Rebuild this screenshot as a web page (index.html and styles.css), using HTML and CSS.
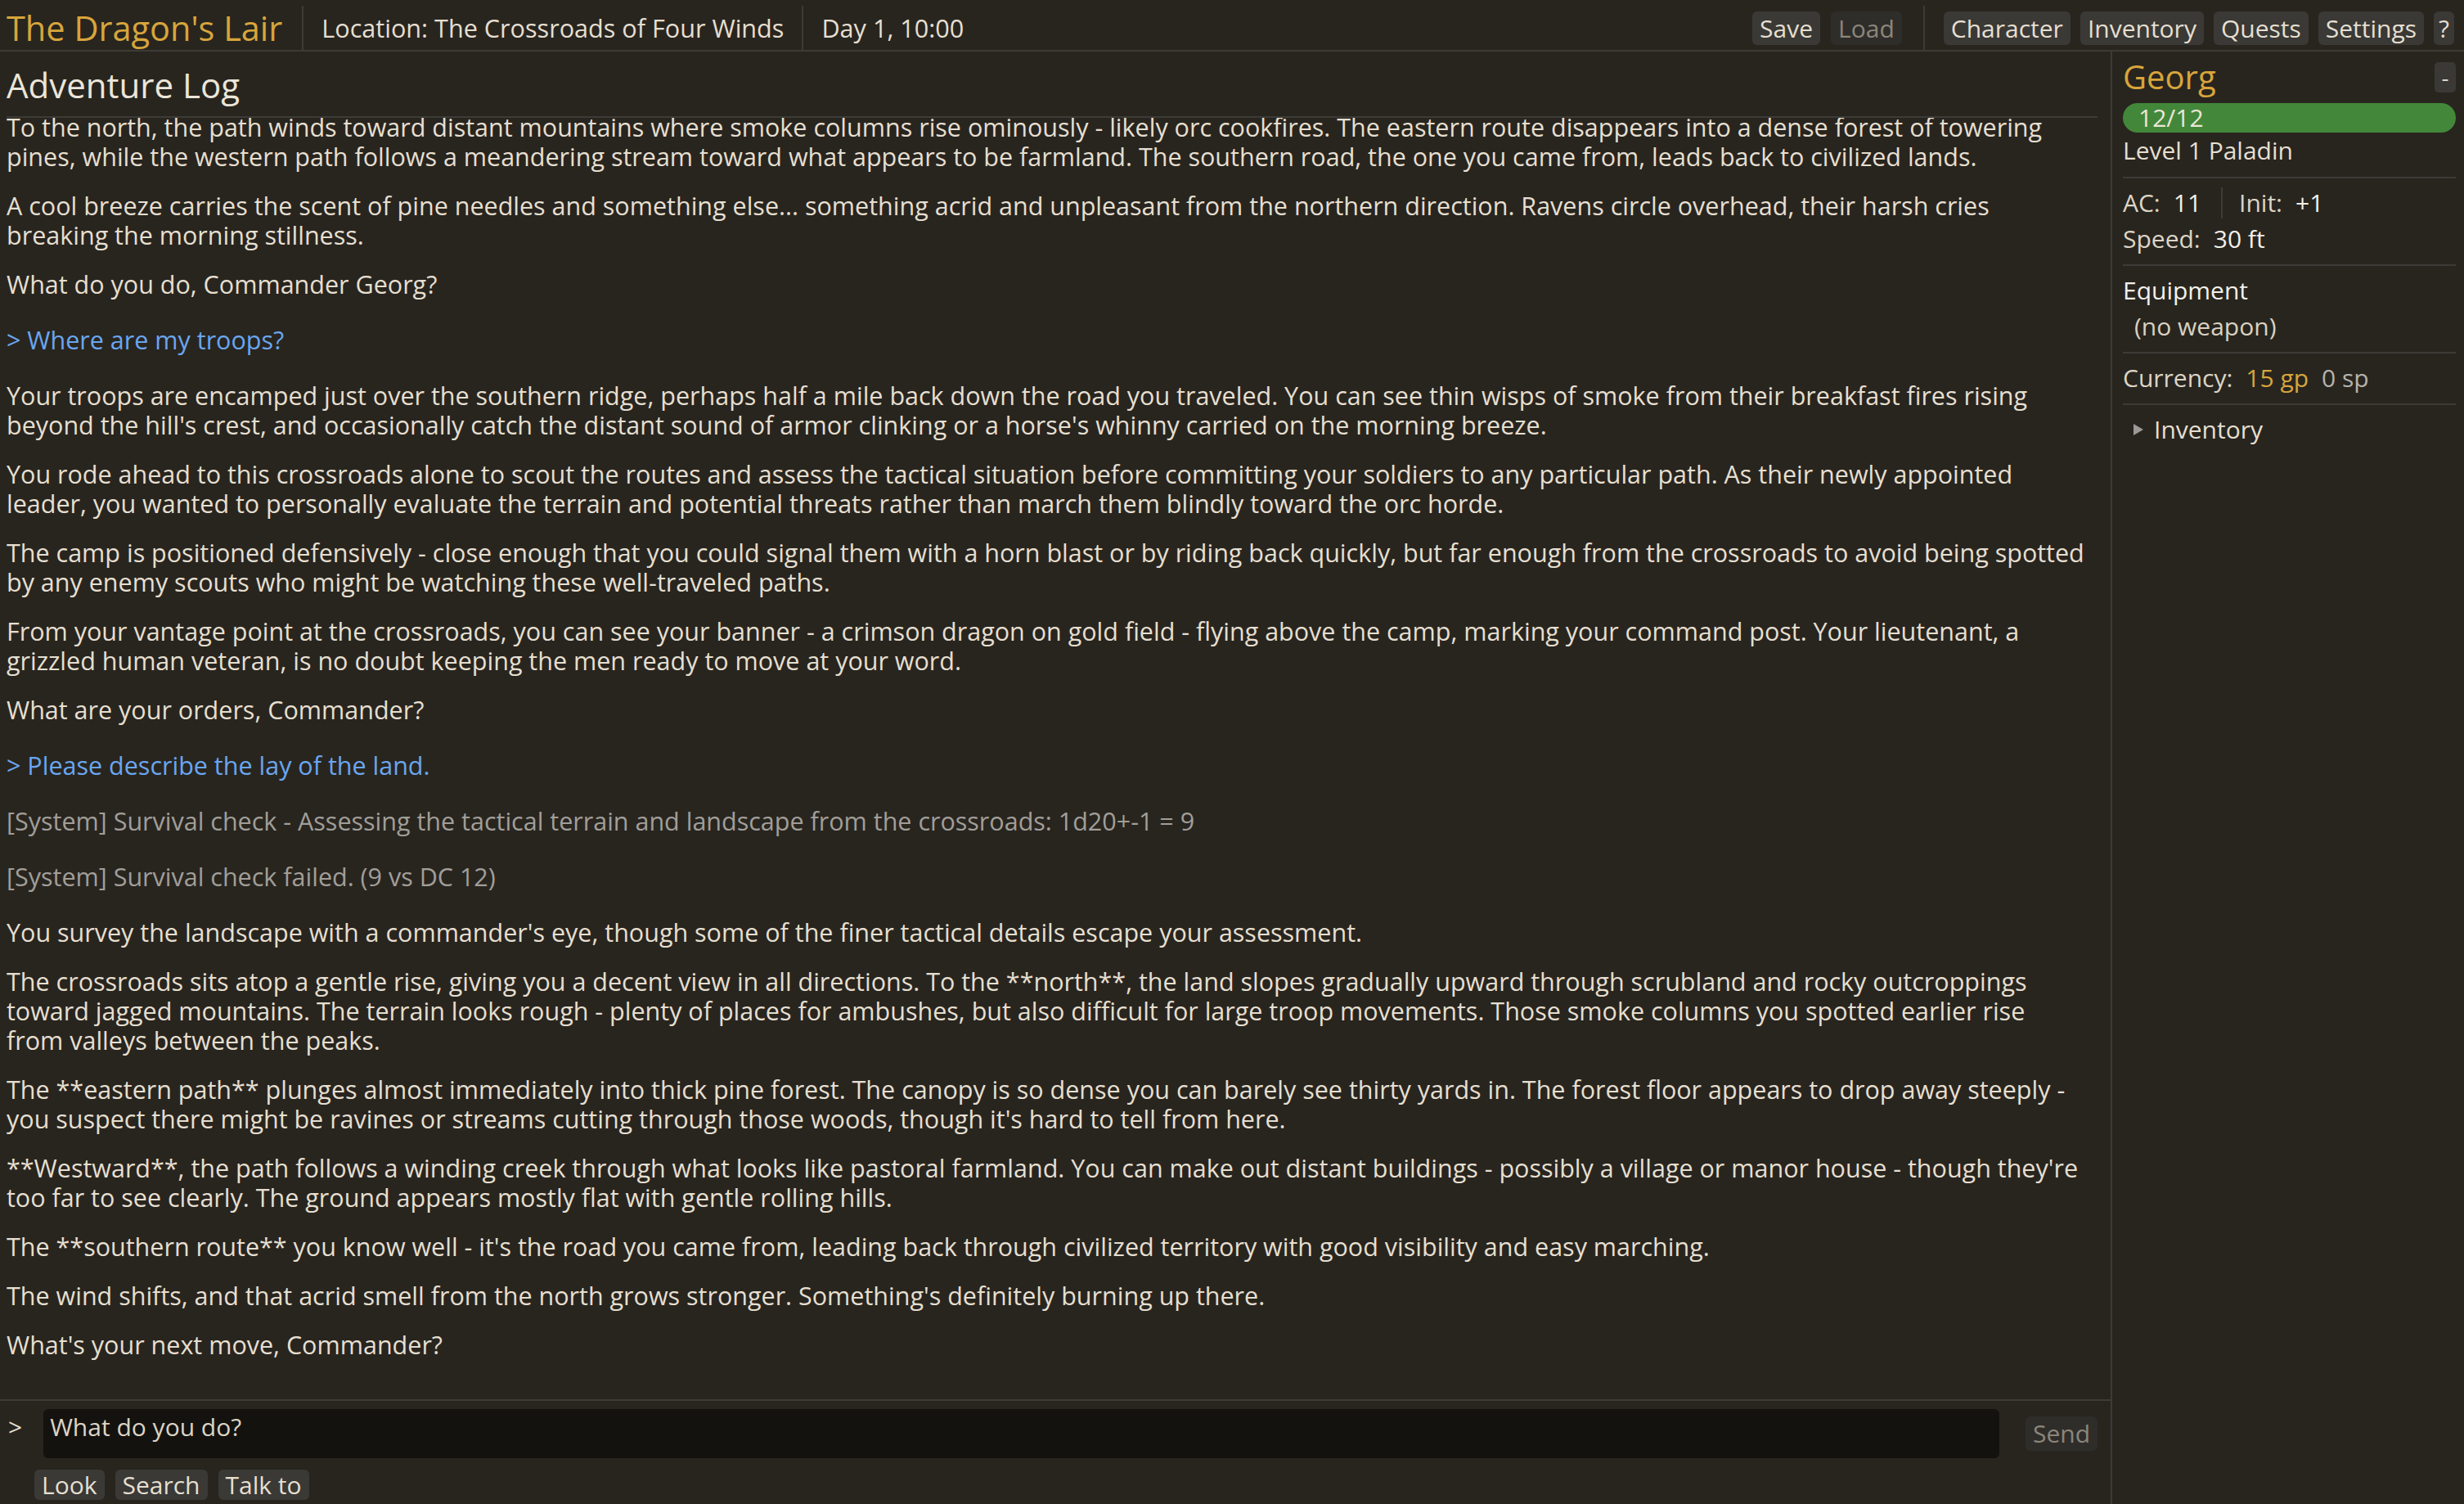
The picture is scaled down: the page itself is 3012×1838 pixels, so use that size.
FILE: index.html
```html
<!DOCTYPE html>
<html>
<head>
    <title>The Dragon's Lair</title>
    <link rel="stylesheet" href="styles.css">
</head>
<body>
    <header class="topbar">
        <div class="game-title">The Dragon's Lair</div>
        <div class="location">Location: The Crossroads of Four Winds</div>
        <div class="game-time">Day 1, 10:00</div>
        <div class="spacer"></div>
        <div class="file-actions">
            <button class="btn">Save</button>
            <button class="btn btn-disabled">Load</button>
        </div>
        <nav class="nav-actions">
            <button class="btn">Character</button>
            <button class="btn">Inventory</button>
            <button class="btn">Quests</button>
            <button class="btn">Settings</button>
            <button class="btn btn-help">?</button>
        </nav>
    </header>

    <div class="content">
        <main class="main-panel">
            <h2 class="log-title">Adventure Log</h2>
            <div class="log">
                <div class="log-inner">
                    <p class="entry">To the north, the path winds toward distant mountains where smoke columns rise ominously - likely orc cookfires. The eastern route disappears into a dense forest of towering pines, while the western path follows a meandering stream toward what appears to be farmland. The southern road, the one you came from, leads back to civilized lands.</p>
                    <p class="entry">A cool breeze carries the scent of pine needles and something else... something acrid and unpleasant from the northern direction. Ravens circle overhead, their harsh cries breaking the morning stillness.</p>
                    <p class="entry">What do you do, Commander Georg?</p>
                    <p class="entry player">&gt; Where are my troops?</p>
                    <p class="entry">Your troops are encamped just over the southern ridge, perhaps half a mile back down the road you traveled. You can see thin wisps of smoke from their breakfast fires rising beyond the hill's crest, and occasionally catch the distant sound of armor clinking or a horse's whinny carried on the morning breeze.</p>
                    <p class="entry">You rode ahead to this crossroads alone to scout the routes and assess the tactical situation before committing your soldiers to any particular path. As their newly appointed leader, you wanted to personally evaluate the terrain and potential threats rather than march them blindly toward the orc horde.</p>
                    <p class="entry">The camp is positioned defensively - close enough that you could signal them with a horn blast or by riding back quickly, but far enough from the crossroads to avoid being spotted by any enemy scouts who might be watching these well-traveled paths.</p>
                    <p class="entry">From your vantage point at the crossroads, you can see your banner - a crimson dragon on gold field - flying above the camp, marking your command post. Your lieutenant, a grizzled human veteran, is no doubt keeping the men ready to move at your word.</p>
                    <p class="entry">What are your orders, Commander?</p>
                    <p class="entry player">&gt; Please describe the lay of the land.</p>
                    <p class="entry system">[System] Survival check - Assessing the tactical terrain and landscape from the crossroads: 1d20+-1 = 9</p>
                    <p class="entry system">[System] Survival check failed. (9 vs DC 12)</p>
                    <p class="entry">You survey the landscape with a commander's eye, though some of the finer tactical details escape your assessment.</p>
                    <p class="entry">The crossroads sits atop a gentle rise, giving you a decent view in all directions. To the **north**, the land slopes gradually upward through scrubland and rocky outcroppings toward jagged mountains. The terrain looks rough - plenty of places for ambushes, but also difficult for large troop movements. Those smoke columns you spotted earlier rise from valleys between the peaks.</p>
                    <p class="entry">The **eastern path** plunges almost immediately into thick pine forest. The canopy is so dense you can barely see thirty yards in. The forest floor appears to drop away steeply - you suspect there might be ravines or streams cutting through those woods, though it's hard to tell from here.</p>
                    <p class="entry">**Westward**, the path follows a winding creek through what looks like pastoral farmland. You can make out distant buildings - possibly a village or manor house - though they're too far to see clearly. The ground appears mostly flat with gentle rolling hills.</p>
                    <p class="entry">The **southern route** you know well - it's the road you came from, leading back through civilized territory with good visibility and easy marching.</p>
                    <p class="entry">The wind shifts, and that acrid smell from the north grows stronger. Something's definitely burning up there.</p>
                    <p class="entry">What's your next move, Commander?</p>
                </div>
            </div>

            <div class="input-area">
                <div class="input-row">
                    <span class="prompt">&gt;</span>
                    <textarea class="command-input" placeholder="What do you do?"></textarea>
                    <button class="btn btn-send">Send</button>
                </div>
                <div class="quick-actions">
                    <button class="btn btn-quick">Look</button>
                    <button class="btn btn-quick">Search</button>
                    <button class="btn btn-quick">Talk to</button>
                </div>
            </div>
        </main>

        <aside class="sidebar">
            <section class="side-section">
                <div class="char-head">
                    <span class="char-name">Georg</span>
                    <button class="collapse-btn">-</button>
                </div>
                <div class="hp-bar">12/12</div>
                <div class="char-class">Level 1 Paladin</div>
            </section>
            <section class="side-section">
                <div class="stat-row">
                    <span class="stat-label">AC:</span>
                    <span class="stat-value">11</span>
                    <span class="stat-divider"></span>
                    <span class="stat-label">Init:</span>
                    <span class="stat-value">+1</span>
                </div>
                <div class="stat-row">
                    <span class="stat-label">Speed:</span>
                    <span class="stat-value">30 ft</span>
                </div>
            </section>
            <section class="side-section">
                <div class="section-title">Equipment</div>
                <div class="equip-item">(no weapon)</div>
            </section>
            <section class="side-section">
                <div class="stat-row">
                    <span class="stat-label">Currency:</span>
                    <span class="coin-gold">15 gp</span>
                    <span class="coin-silver">0 sp</span>
                </div>
            </section>
            <details class="inventory">
                <summary>Inventory</summary>
            </details>
        </aside>
    </div>
</body>
</html>
```

FILE: styles.css
```css
* {
    box-sizing: border-box;
}
html, body {
    height: 100%;
}
body {
    margin: 0;
    font-family: "Open Sans", "Noto Sans", sans-serif;
    font-size: 30px;
    color: #e6dfd0;
    background-color: #28251f;
    display: flex;
    flex-direction: column;
    overflow: hidden;
}

/* top bar */
.topbar {
    height: 63px;
    flex-shrink: 0;
    padding-top: 7px;
    border-bottom: 2px solid #3d3b37;
    display: flex;
    align-items: stretch;
}
.game-title {
    display: flex;
    align-items: center;
    padding: 0 24px 0 8px;
    font-size: 41.5px;
    color: #d8a53b;
    border-right: 2px solid #3d3b37;
}
.location,
.game-time {
    display: flex;
    align-items: center;
    padding: 0 22px;
    font-size: 30.6px;
}
.location {
    border-right: 2px solid #3d3b37;
}
.spacer {
    flex: 1;
}
.file-actions,
.nav-actions {
    display: flex;
    align-items: center;
    gap: 13px;
}
.file-actions {
    padding-right: 26px;
    border-right: 2px solid #3d3b37;
}
.nav-actions {
    gap: 12px;
    padding: 0 12px 0 23px;
}
.btn {
    font-family: inherit;
    font-size: 30px;
    height: 41px;
    line-height: 41px;
    padding: 0 9px;
    background-color: #3a3936;
    color: #e6dfd0;
    border: none;
    border-radius: 6px;
    cursor: pointer;
}
.btn:hover {
    background-color: #4a4845;
}
.btn-disabled {
    background-color: #2f2d2a;
    color: #8b867b;
}
.btn-help {
    padding: 0 6px;
}

/* layout */
.content {
    flex: 1;
    min-height: 0;
    display: flex;
}
.main-panel {
    flex: 1;
    min-width: 0;
    display: flex;
    flex-direction: column;
}

/* adventure log */
.log-title {
    margin: 0 16px 0 8px;
    padding: 16px 0 13px;
    font-size: 42px;
    font-weight: 400;
    line-height: 50px;
    color: #ece6d9;
    border-bottom: 2px solid #3d3b37;
}
.log {
    flex: 1;
    min-height: 0;
    overflow: hidden;
    display: flex;
    flex-direction: column;
    justify-content: flex-end;
    padding: 0 29px 0 8px;
    font-size: 30.5px;
    line-height: 36px;
}
.log-inner {
    flex-shrink: 0;
    padding-bottom: 25px;
}
.entry {
    margin: 0 0 24px;
}
.entry.player {
    margin: 32px 0;
    color: #6aa6ef;
}
.entry.system {
    margin: 32px 0;
    color: #a19e99;
}

/* command input */
.input-area {
    flex-shrink: 0;
    border-top: 2px solid #3d3b37;
    padding: 10px 16px 5px 8px;
}
.input-row {
    display: flex;
    align-items: center;
}
.prompt {
    align-self: flex-start;
    padding: 4px 0 0 2px;
    margin-right: 26px;
    line-height: 36px;
}
.command-input {
    flex: 1;
    height: 60px;
    padding: 4px 8px;
    font-family: inherit;
    font-size: 30px;
    line-height: 36px;
    color: #e6dfd0;
    background-color: #14120e;
    border: none;
    border-radius: 6px;
    resize: none;
    outline: none;
}
.command-input::placeholder {
    color: #dcd4c4;
}
.btn-send {
    margin-left: 32px;
    height: 42px;
    line-height: 42px;
    background-color: #2f2d2a;
    color: #8b867b;
}
.quick-actions {
    display: flex;
    gap: 13px;
    margin-top: 14px;
    padding-left: 34px;
}
.btn-quick {
    height: 37px;
    line-height: 37px;
}

/* character sidebar */
.sidebar {
    width: 432px;
    flex-shrink: 0;
    border-left: 2px solid #3d3b37;
    padding: 7px 10px 0 13px;
    line-height: 44px;
}
.side-section {
    padding: 8px 0 9px;
    border-bottom: 2px solid #3d3b37;
}
.side-section:first-child {
    padding: 0 0 10px;
}
.char-head {
    display: flex;
    align-items: center;
    justify-content: space-between;
}
.char-name {
    font-size: 40px;
    line-height: 48px;
    color: #d8a53b;
}
.collapse-btn {
    width: 26px;
    height: 37px;
    padding: 0;
    font-family: inherit;
    font-size: 28px;
    line-height: 37px;
    color: #dcd6ca;
    background-color: #3a3936;
    border: none;
    border-radius: 5px;
}
.hp-bar {
    margin-top: 8px;
    height: 36px;
    line-height: 36px;
    padding-left: 19px;
    border-radius: 18px;
    background-color: #43883a;
    color: #ebe6d9;
}
.stat-row {
    display: flex;
    align-items: center;
}
.stat-label {
    margin-right: 16px;
    color: #ddd5c5;
}
.stat-value {
    color: #f3f0e9;
}
.stat-divider {
    width: 2px;
    height: 38px;
    margin: 0 20px 0 24px;
    background-color: #3d3b37;
}
.section-title {
    color: #f3f0e9;
}
.equip-item {
    padding-left: 14px;
    color: #d9d1c1;
}
.coin-gold {
    color: #d8a53b;
}
.coin-silver {
    margin-left: 16px;
    color: #b5b3ae;
}
.inventory summary {
    display: flex;
    align-items: center;
    padding-top: 8px;
    list-style: none;
    cursor: pointer;
}
.inventory summary::-webkit-details-marker {
    display: none;
}
.inventory summary::before {
    content: "";
    margin: 0 13px 0 13px;
    border-left: 12px solid #9c9a96;
    border-top: 7px solid transparent;
    border-bottom: 7px solid transparent;
}
```
